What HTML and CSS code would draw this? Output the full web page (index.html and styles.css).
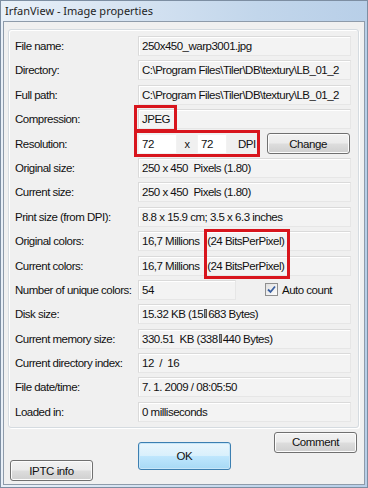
FILE: index.html
```html
<!DOCTYPE html>
<html lang="en">

<head>
    <meta charset="UTF-8">
    <title>IrfanView - Image properties</title>
    <link rel="stylesheet" href="styles.css">
</head>

<body>
    <div class="window">
        <div class="titlebar">IrfanView - Image properties</div>
        <div class="client">
            <div class="group">
                <span class="label">File name:</span>
                <div class="field">250x450_warp3001.jpg</div>

                <span class="label">Directory:</span>
                <div class="field">C:\Program Files\Tiler\DB\textury\LB_01_2</div>

                <span class="label">Full path:</span>
                <div class="field">C:\Program Files\Tiler\DB\textury\LB_01_2</div>

                <span class="label">Compression:</span>
                <div class="field">JPEG</div>

                <span class="label">Resolution:</span>
                <div class="res_row">
                    <div class="edit">72</div>
                    <span class="times">x</span>
                    <div class="edit narrow">72</div>
                    <span class="dpi">DPI</span>
                    <button class="btn change">Change</button>
                </div>

                <span class="label">Original size:</span>
                <div class="field">250 x 450&nbsp; Pixels (1.80)</div>

                <span class="label">Current size:</span>
                <div class="field">250 x 450&nbsp; Pixels (1.80)</div>

                <span class="label">Print size (from DPI):</span>
                <div class="field">8.8 x 15.9 cm; 3.5 x 6.3 inches</div>

                <span class="label">Original colors:</span>
                <div class="field">16,7 Millions <span class="bits">(24 BitsPerPixel)</span></div>

                <span class="label">Current colors:</span>
                <div class="field">16,7 Millions <span class="bits">(24 BitsPerPixel)</span></div>

                <span class="label">Number of unique colors:</span>
                <div class="count_row">
                    <div class="field short">54</div>
                    <label class="check">
                        <span class="box">
                            <svg width="9" height="9" viewBox="0 0 9 9">
                                <path d="M1 4.5 L3.5 7 L8 1.5" fill="none" stroke="#3a5fa0" stroke-width="1.8" />
                            </svg>
                        </span>
                        Auto count
                    </label>
                </div>

                <span class="label">Disk size:</span>
                <div class="field">15.32 KB (15<span class="sep"></span>683 Bytes)</div>

                <span class="label">Current memory size:</span>
                <div class="field">330.51&nbsp; KB (338<span class="sep"></span>440 Bytes)</div>

                <span class="label">Current directory index:</span>
                <div class="field">12&nbsp; /&nbsp; 16</div>

                <span class="label">File date/time:</span>
                <div class="field">7. 1. 2009 / 08:05:50</div>

                <span class="label">Loaded in:</span>
                <div class="field">0 milliseconds</div>
            </div>

            <div class="buttons">
                <button class="btn iptc">IPTC info</button>
                <button class="btn ok">OK</button>
                <button class="btn comment">Comment</button>
            </div>
        </div>

        <!-- red highlight boxes drawn over the dialog -->
        <div class="mark mark_jpeg"></div>
        <div class="mark mark_res"></div>
        <div class="mark mark_bits"></div>
    </div>
</body>

</html>
```

FILE: styles.css
```css
* {
    margin: 0;
    padding: 0;
    box-sizing: border-box;
}

body {
    background: #fff;
}

.window {
    position: relative;
    width: 368px;
    height: 488px;
    border: 1px solid #7d8ea2;
    padding: 0 2px 2px 2px;
    background: linear-gradient(to right, #e9f0f8, #c2d6eb 70%, #b8cfe8);
    display: flex;
    flex-flow: column;
}

.titlebar {
    height: 20px;
    padding-left: 2px;
    font-family: "Noto Sans", "Open Sans", sans-serif;
    font-size: 11px;
    line-height: 19px;
    color: #1e1e1e;
}

.client {
    flex: 1;
    background: #f0f0f0;
    border: 1px solid #8e9baa;
    display: flex;
    flex-flow: column;
    font-family: "Liberation Sans", Arial, sans-serif;
    font-size: 11.5px;
    letter-spacing: -0.5px;
    color: #111;
}

.group {
    margin: 7px 5px 0 4px;
    padding: 6px 7px 5px 6px;
    border: 1px solid #d5dbe0;
    border-radius: 3px;
    box-shadow: inset 1px 1px 0 #fff, 1px 1px 0 #fff;
    display: grid;
    grid-template-columns: 123px minmax(0, 1fr);
    grid-auto-rows: 20px;
    row-gap: 4.4px;
    align-items: center;
}

.label {
    white-space: nowrap;
}

.field {
    height: 20px;
    line-height: 18px;
    padding-left: 3px;
    white-space: nowrap;
    overflow: hidden;
    background: #f3f3f3;
    border: 1px solid #dadada;
    border-right-color: #e6e6e6;
    border-bottom-color: #e6e6e6;
    box-shadow: inset 1px 1px 0 #fff;
}

.field.short {
    width: 98px;
}

.bits {
    margin-left: 5px;
}

.res_row,
.count_row {
    display: flex;
    align-items: center;
    height: 20px;
}

.edit {
    width: 39px;
    height: 20px;
    line-height: 18px;
    padding-left: 3px;
    background: #fff;
    border: 1px solid #f2f2f2;
}

.edit.narrow {
    width: 30px;
}

.times {
    width: 20px;
    text-align: center;
    font-size: 11px;
}

.dpi {
    margin-left: 11px;
}

.change {
    margin-left: 11px;
    width: 83px;
    height: 21px;
}

.sep {
    display: inline-block;
    width: 3px;
    height: 9px;
    border: 1px solid #555;
    background: #999;
    margin: 0 1px;
}

.check {
    margin-left: 29px;
    display: flex;
    align-items: center;
    gap: 4px;
}

.box {
    width: 13px;
    height: 13px;
    border: 1px solid #8f8f8f;
    background: linear-gradient(135deg, #e0e0e0, #fdfdfd);
    display: flex;
    align-items: center;
    justify-content: center;
}

.buttons {
    flex: 1;
    display: flex;
    padding: 4px 6px 3px 6px;
}

.btn {
    font-family: "Liberation Sans", Arial, sans-serif;
    font-size: 11.5px;
    letter-spacing: -0.4px;
    color: #111;
    border: 1px solid #707070;
    border-radius: 3px;
    background: linear-gradient(#f2f2f2 0%, #ebebeb 48%, #dddddd 52%, #cfcfcf 100%);
    box-shadow: inset 0 0 0 1px #fcfcfc;
}

.iptc {
    align-self: flex-end;
    width: 83px;
    height: 21px;
}

.ok {
    margin: 10px 0 0 45px;
    width: 93px;
    height: 28px;
    border-color: #3c7fb1;
    background: linear-gradient(#eaf6fd 0%, #d9f0fc 48%, #bee6fd 52%, #a7d9f5 100%);
    box-shadow: inset 0 0 0 1px #c7e6f8;
}

.comment {
    align-self: flex-start;
    margin-left: 43px;
    width: 83px;
    height: 21px;
}

.mark {
    position: absolute;
    border: 3px solid #d8151d;
}

.mark_jpeg {
    left: 133px;
    top: 104px;
    width: 43px;
    height: 27px;
}

.mark_res {
    left: 133px;
    top: 129px;
    width: 126px;
    height: 27px;
}

.mark_bits {
    left: 203px;
    top: 228px;
    width: 86px;
    height: 50px;
}
```
